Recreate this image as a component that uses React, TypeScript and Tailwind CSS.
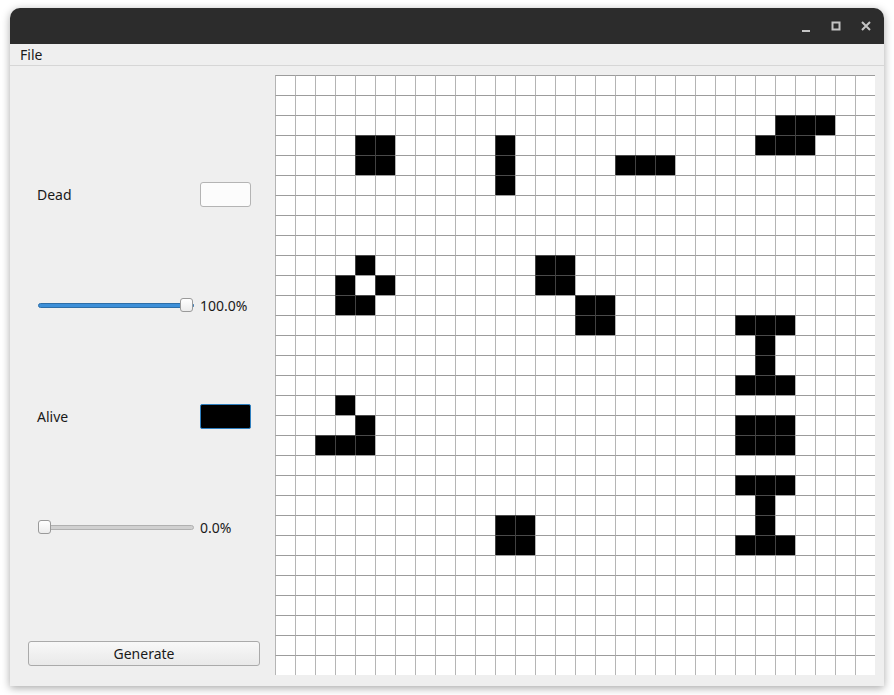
import React from "react";

const live: Record<number, number[]> = {
  2: [25, 26, 27],
  3: [4, 5, 11, 24, 25, 26],
  4: [4, 5, 11, 17, 18, 19],
  5: [11],
  9: [4, 13, 14],
  10: [3, 5, 13, 14],
  11: [3, 4, 15, 16],
  12: [15, 16, 23, 24, 25],
  13: [24],
  14: [24],
  15: [23, 24, 25],
  16: [3],
  17: [4, 23, 24, 25],
  18: [2, 3, 4, 23, 24, 25],
  20: [23, 24, 25],
  21: [24],
  22: [11, 12, 24],
  23: [11, 12, 23, 24, 25],
};

function Grid() {
  const cells = [];
  for (let r = 0; r < 30; r++) {
    for (let c = 0; c < 30; c++) {
      const alive = (live[r] || []).includes(c);
      cells.push(
        <div
          key={`${r}-${c}`}
          className={`w-[20px] h-[20px] border-l border-t border-l-[rgba(120,120,120,0.55)] border-t-[rgba(110,110,110,0.68)] ${alive ? "bg-black" : "bg-white"}`}
        />
      );
    }
  }
  return (
    <div className="grid shrink-0 grid-cols-[repeat(30,20px)] grid-rows-[repeat(30,20px)] w-[600px] h-[600px] bg-white">
      {cells}
    </div>
  );
}

function Slider({ value }: { value: number }) {
  const full = value >= 100;
  return (
    <div className="relative w-[156px] h-[16px] flex items-center shrink-0">
      <div
        className={`w-full h-[5px] rounded-full border ${full ? "bg-[#3d8fd8] border-[#2d6ea8]" : "bg-[#d0d0d0] border-[#b0b0b0]"}`}
      />
      <div
        className={`absolute top-[1px] w-[13px] h-[14px] rounded-[3px] border border-[#9a9a9a] bg-gradient-to-b from-white to-[#ececec] ${full ? "left-[142px]" : "left-0"}`}
      />
    </div>
  );
}

export default function App() {
  const font = { fontFamily: '"Noto Sans", "Open Sans", sans-serif' };
  return (
    <div className="w-[894px] h-[695px] bg-white relative" style={font}>
      <div className="absolute left-[10px] top-[8px] w-[874px] h-[678px] flex flex-col rounded-t-[10px] bg-[#efefef] shadow-[0_2px_8px_rgba(0,0,0,0.35)] overflow-hidden">
        {/* Title bar */}
        <div className="h-[36px] bg-[#2c2c2c] flex items-center justify-end pr-[12px] gap-[18px] shrink-0">
          <svg width="12" height="12" viewBox="0 0 12 12" className="mt-[2px]">
            <rect x="2" y="9" width="8" height="2" fill="#c4c4c4" />
          </svg>
          <svg width="12" height="12" viewBox="0 0 12 12">
            <rect x="2.5" y="2.5" width="7" height="7" fill="none" stroke="#c4c4c4" strokeWidth="2" />
          </svg>
          <svg width="12" height="12" viewBox="0 0 12 12">
            <path d="M2 2 L10 10 M10 2 L2 10" stroke="#c4c4c4" strokeWidth="2" />
          </svg>
        </div>
        {/* Menu bar */}
        <div className="h-[22px] border-b border-[#d6d6d6] flex items-center pl-[10px] text-[14px] text-[#1a1a1a] shrink-0">
          File
        </div>
        {/* Body */}
        <div className="flex flex-1 pt-[9px] pr-[9px] pb-[11px]">
          <div className="w-[265px] shrink-0 flex flex-col pl-[18px] pr-[15px] -mt-[9px] -mb-[11px] pb-[20px] text-[14px] text-[#1a1a1a]">
            <div className="mt-[116px] h-[25px] flex items-center justify-between pl-[9px] pr-[9px]">
              <span>Dead</span>
              <div className="w-[51px] h-[25px] rounded-[3px] border border-[#b4b4b4] bg-[#fcfcfc]" />
            </div>
            <div className="mt-[90px] h-[16px] flex items-center gap-[6px] pl-[10px]">
              <Slider value={100} />
              <span>100.0%</span>
            </div>
            <div className="mt-[91px] h-[25px] flex items-center justify-between pl-[9px] pr-[9px]">
              <span>Alive</span>
              <div className="w-[51px] h-[25px] rounded-[2px] border border-[#2f7fbf] bg-black" />
            </div>
            <div className="mt-[90px] h-[16px] flex items-center gap-[6px] pl-[10px]">
              <Slider value={0} />
              <span>0.0%</span>
            </div>
            <button className="mt-auto h-[25px] w-[232px] rounded-[3px] border border-[#aaaaaa] bg-gradient-to-b from-[#f8f8f8] to-[#e9e9e9] text-[14px] text-[#1a1a1a] flex items-center justify-center">
              Generate
            </button>
          </div>
          <Grid />
        </div>
      </div>
    </div>
  );
}
